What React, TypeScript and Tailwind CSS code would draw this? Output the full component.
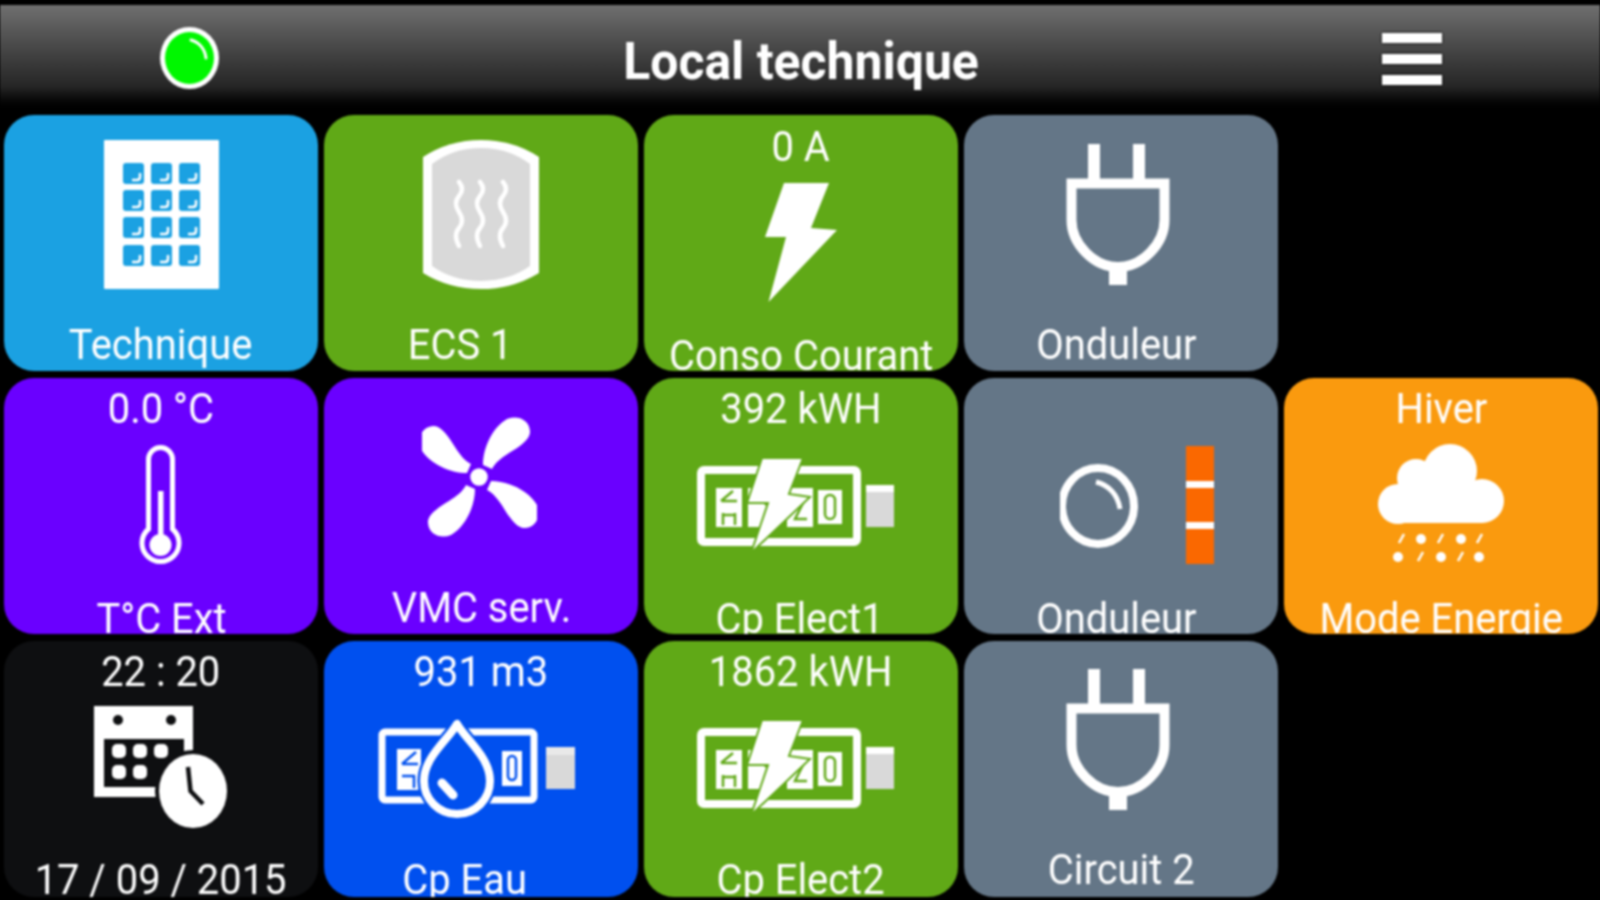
import type { ReactNode } from "react";

const fontFamily = "font-['Roboto','Liberation_Sans',sans-serif]";

function Tile({
  bg,
  value,
  valueClass = "",
  label,
  labelClass,
  children,
}: {
  bg: string;
  value?: string;
  valueClass?: string;
  label: string;
  labelClass: string;
  children: ReactNode;
}) {
  return (
    <div className={`flex h-[256px] w-[314px] flex-col items-center overflow-hidden rounded-[30px] text-[42px] font-normal text-white ${bg}`}>
      {value && (
        <div className={`h-[60px] shrink-0 scale-x-[0.95] whitespace-nowrap leading-[60px] ${valueClass}`}>{value}</div>
      )}
      {children}
      <div className={`h-[44px] shrink-0 scale-x-[0.95] whitespace-nowrap leading-[44px] ${labelClass}`}>{label}</div>
    </div>
  );
}

function BuildingIcon() {
  const xs = [19, 47, 75];
  const ys = [23, 50, 77, 105];
  return (
    <svg viewBox="0 0 115 149" className="mt-[25px] h-[149px] w-[115px] shrink-0">
      <rect width="115" height="149" rx="1" fill="#fff" />
      {ys.map((y) =>
        xs.map((x) => (
          <g key={`${x}-${y}`}>
            <rect x={x} y={y} width="21" height="21" rx="3" fill="#1ba1e2" />
            <path d={`M${x + 9} ${y + 17}h5q3 0 3-3v-4`} fill="none" stroke="#fff" strokeWidth="2.500" />
          </g>
        )),
      )}
    </svg>
  );
}

function TankIcon() {
  return (
    <svg viewBox="0 0 116 149" className="mt-[25px] h-[149px] w-[116px] shrink-0">
      <path d="M0 17Q26 0 58 0T116 17V133Q90 149 58 149T0 133Z" fill="#fff" />
      <path d="M9 24Q30 8 58 8T107 24V126Q86 141 58 141T9 126Z" fill="#d9d9d9" />
      {[36, 57, 80].map((x) => (
        <path
          key={x}
          d={`M${x} 42q6 7 0 14t0 16t0 16t0 18`}
          fill="none"
          stroke="#fff"
          strokeWidth="4.500"
          strokeLinecap="round"
        />
      ))}
    </svg>
  );
}

function BoltIcon() {
  return (
    <svg viewBox="0 0 72 120" className="mt-[5px] h-[120px] w-[72px] shrink-0">
      <path d="M19 1H64L46 46L72 48L3.500 120L21 55H0Z" fill="#fff" />
    </svg>
  );
}

function PlugIcon({ className }: { className: string }) {
  return (
    <svg viewBox="0 0 104 141" className={`h-[141px] w-[104px] shrink-0 ${className}`}>
      <rect x="22" y="0" width="12" height="36" fill="#fff" />
      <rect x="67" y="0" width="12" height="36" fill="#fff" />
      <rect x="43" y="118" width="18" height="23" fill="#fff" />
      <path
        d="M5.500 39.500H98.500V76C98.500 100 76 123 52 123C28 123 5.500 100 5.500 76Z"
        fill="none"
        stroke="#fff"
        strokeWidth="10"
      />
    </svg>
  );
}

function ThermometerIcon() {
  return (
    <svg viewBox="0 0 43 120" className="mt-[6px] mr-[1px] h-[120px] w-[43px] shrink-0">
      <path
        d="M9.500 84V14.500a12 12 0 0 1 24 0V84A18.500 18.500 0 1 1 9.500 84Z"
        fill="none"
        stroke="#fff"
        strokeWidth="5"
      />
      <rect x="19" y="46" width="5.500" height="52" fill="#fff" />
      <circle cx="21.500" cy="100" r="11" fill="#fff" />
    </svg>
  );
}

function FanIcon() {
  const blade = "M4-12C4-30 14-50 28-58C38-62 50-58 51-46C52-38 40-30 30-24C22-19 16-14 13-8Z";
  return (
    <svg viewBox="0 0 115 121" className="mt-[39px] mr-[4px] h-[121px] w-[115px] shrink-0">
      <g transform="translate(57 60)">
        {[0, 90, 180, 270].map((r) => (
          <path key={r} d={blade} fill="#fff" transform={`rotate(${r})`} />
        ))}
        <circle r="9.500" fill="#fff" stroke="#6a00ff" strokeWidth="1.500" />
      </g>
    </svg>
  );
}

// compteur: boitier, chiffres et borne
function MeterBody({ color }: { color: string }) {
  return (
    <>
      <rect x="4" y="13" width="156" height="72" rx="3" fill="none" stroke="#fff" strokeWidth="8" />
      <rect x="169" y="28" width="28" height="42" fill="#d9d9d9" />
      <rect x="169" y="28" width="28" height="7" fill="#fff" />
      <rect x="19" y="31" width="26" height="39" fill="#fff" />
      <rect x="51" y="31" width="26" height="39" fill="#fff" />
      <rect x="90" y="31" width="26" height="39" fill="#fff" />
      <rect x="121" y="33" width="24" height="34" fill="#fff" />
      <path d="M24 44l12-10M24 44h16M26 56v12M38 56v12M26 58h12M60 40l10 8M96 42q8-6 12 0l-10 20h12" fill="none" stroke={color} strokeWidth="2.500" />
      <rect x="128" y="38" width="10" height="24" rx="5" fill="none" stroke={color} strokeWidth="2.500" />
    </>
  );
}

function ElectricMeterIcon({ className }: { className: string }) {
  return (
    <svg viewBox="0 0 199 96" className={`h-[96px] w-[199px] shrink-0 ${className}`}>
      <MeterBody color="#60a917" />
      <path
        d="M65 1H106L92 37L113 40L54 96L71 46H50Z"
        fill="#fff"
        stroke="#60a917"
        strokeWidth="2"
      />
    </svg>
  );
}

function WaterMeterIcon() {
  return (
    <svg viewBox="0 0 199 99" className="mt-[17px] mr-[7px] h-[99px] w-[199px] shrink-0">
      <g transform="translate(0 9)">
        <rect x="4" y="4" width="152" height="68" rx="3" fill="none" stroke="#fff" strokeWidth="7" />
        <rect x="168" y="19" width="29" height="42" fill="#d9d9d9" />
        <rect x="168" y="19" width="29" height="8" fill="#e9e9e9" />
        <rect x="19" y="21" width="24" height="41" fill="#fff" />
        <rect x="124" y="23" width="20" height="35" fill="#fff" />
        <path d="M24 36l14-12M24 36h16M24 48h12v12" fill="none" stroke="#0050ef" strokeWidth="2.500" />
        <rect x="130" y="28" width="8" height="24" rx="4" fill="none" stroke="#0050ef" strokeWidth="2.500" />
      </g>
      <path
        d="M79 5C70 21 46 38 46 62A33 33 0 0 0 112 62C112 38 88 21 79 5Z"
        fill="#0050ef"
        stroke="#0050ef"
        strokeWidth="13"
        strokeLinejoin="round"
      />
      <path
        d="M79 5C70 21 46 38 46 62A33 33 0 0 0 112 62C112 38 88 21 79 5Z"
        fill="#0050ef"
        stroke="#fff"
        strokeWidth="8"
        strokeLinejoin="round"
      />
      <path d="M64 64L75 76" stroke="#fff" strokeWidth="9" strokeLinecap="round" />
    </svg>
  );
}

function UpsIcon() {
  return (
    <svg viewBox="0 0 155 120" className="mt-[67px] ml-[33px] h-[120px] w-[155px] shrink-0">
      <ellipse cx="38" cy="61" rx="36" ry="38" fill="none" stroke="#fff" strokeWidth="8" />
      <path d="M36 37C49 40 58 50 60 64" fill="none" stroke="#fff" strokeWidth="5" />
      <rect x="126" y="1" width="28" height="118" fill="#fa6800" />
      <rect x="126" y="36" width="28" height="7" fill="#fff" />
      <rect x="126" y="77" width="28" height="7" fill="#fff" />
    </svg>
  );
}

function SnowCloudIcon() {
  const row1 = [24, 43, 63, 83, 102];
  const row2 = [20, 43, 63, 83, 101];
  return (
    <svg viewBox="0 0 126 120" className="mt-[5px] h-[120px] w-[126px] shrink-0">
      <circle cx="20" cy="60" r="20" fill="#fff" />
      <circle cx="38" cy="34" r="19" fill="#fff" />
      <circle cx="72" cy="27" r="27" fill="#fff" />
      <circle cx="104" cy="57" r="22" fill="#fff" />
      <rect x="20" y="40" width="85" height="39" fill="#fff" />
      {row1.map((x, i) =>
        i % 2 === 0 ? (
          <path key={x} d={`M${x - 3} 99l5-9`} stroke="#fff" strokeWidth="2.500" />
        ) : (
          <circle key={x} cx={x} cy="95" r="5" fill="#fff" />
        ),
      )}
      {row2.map((x, i) =>
        i % 2 === 1 ? (
          <path key={x} d={`M${x - 3} 117l5-9`} stroke="#fff" strokeWidth="2.500" />
        ) : (
          <circle key={x} cx={x} cy="113" r="5" fill="#fff" />
        ),
      )}
    </svg>
  );
}

function CalendarClockIcon() {
  return (
    <svg viewBox="0 0 136 124" className="mt-[4px] mr-[2px] h-[124px] w-[136px] shrink-0">
      <rect x="2" y="0" width="99" height="91" fill="#fff" />
      <rect x="12" y="33" width="80" height="48" fill="#0e0f11" />
      <circle cx="26" cy="14" r="5" fill="#0e0f11" />
      <circle cx="79" cy="14" r="5" fill="#0e0f11" />
      {[20, 41, 62].map((x) => (
        <rect key={x} x={x} y="38" width="14" height="14" rx="5" fill="#fff" />
      ))}
      {[20, 41].map((x) => (
        <rect key={x} x={x} y="59" width="14" height="14" rx="5" fill="#fff" />
      ))}
      <ellipse cx="101" cy="85" rx="38" ry="41" fill="#0e0f11" />
      <ellipse cx="101" cy="85" rx="34" ry="37" fill="#fff" />
      <path d="M96 61L98.500 85L111 98" fill="none" stroke="#0e0f11" strokeWidth="4.500" />
    </svg>
  );
}

function StatusLed() {
  return (
    <svg viewBox="0 0 59 62" className="h-[62px] w-[59px]">
      <ellipse cx="29.500" cy="31" rx="29.500" ry="31" fill="#fff" />
      <ellipse cx="29.500" cy="31" rx="24.500" ry="26" fill="#00f700" />
      <path d="M31 13C39 15 45 22 46 31" fill="none" stroke="#fff" strokeWidth="3" strokeLinecap="round" />
    </svg>
  );
}

export default function App() {
  return (
    <div className="h-[900px] w-[1600px] overflow-hidden bg-black">
      <div className={`h-[900px] w-[1600px] blur-[0.8px] ${fontFamily}`}>
        {/* Barre du haut */}
        <div className="grid h-[115px] grid-cols-[378px_1fr_376px] items-center border-t-[5px] border-black bg-gradient-to-b from-[#707070] via-[#262626] via-[74%] to-black pb-[8px]">
          <div className="flex justify-center pt-[3px]">
            <StatusLed />
          </div>
          <h1 className="scale-x-[0.96] pt-[11px] text-center text-[52px] leading-[60px] font-bold text-white">Local technique</h1>
          <div className="flex flex-col items-center gap-[11px] pt-[5px]">
            <span className="h-[10px] w-[60px] bg-white shadow-[0_0_3px_#000]" />
            <span className="h-[10px] w-[60px] bg-white shadow-[0_0_3px_#000]" />
            <span className="h-[10px] w-[60px] bg-white shadow-[0_0_3px_#000]" />
          </div>
        </div>

        <div className="grid grid-cols-[repeat(5,314px)] gap-x-[6px] gap-y-[7px] pl-[4px]">
          <Tile bg="bg-[#1ba1e2]" label="Technique" labelClass="mt-[34px]">
            <BuildingIcon />
          </Tile>
          <Tile bg="bg-[#60a917]" label="ECS 1" labelClass="mt-[34px] mr-[42px]">
            <TankIcon />
          </Tile>
          <Tile bg="bg-[#60a917]" value="0 A" valueClass="mt-[2px]" label="Conso Courant" labelClass="mt-[32px]">
            <BoltIcon />
          </Tile>
          <Tile bg="bg-[#647687]" label="Onduleur" labelClass="mt-[38px] mr-[10px]">
            <PlugIcon className="mt-[29px] mr-[7px]" />
          </Tile>
          <div />

          <Tile bg="bg-[#6a00ff]" value="0.0 °C" valueClass="mt-[1px]" label="T°C Ext" labelClass="mt-[32px]">
            <ThermometerIcon />
          </Tile>
          <Tile bg="bg-[#6a00ff]" label="VMC serv." labelClass="mt-[48px]">
            <FanIcon />
          </Tile>
          <Tile bg="bg-[#60a917]" value="392 kWH" valueClass="mt-[1px]" label="Cp Elect1" labelClass="mt-[44px] mr-[2px]">
            <ElectricMeterIcon className="mt-[18px] mr-[9px]" />
          </Tile>
          <Tile bg="bg-[#647687]" label="Onduleur" labelClass="mt-[32px] mr-[10px]">
            <UpsIcon />
          </Tile>
          <Tile bg="bg-[#fa9a0e]" value="Hiver" valueClass="mt-[1px]" label="Mode Energie" labelClass="mt-[33px]">
            <SnowCloudIcon />
          </Tile>

          <Tile bg="bg-[#0e0f11]" value="22 : 20" valueClass="mt-[1px]" label="17 / 09 / 2015" labelClass="mt-[28px]">
            <CalendarClockIcon />
          </Tile>
          <Tile bg="bg-[#0050ef]" value="931 m3" valueClass="mt-[1px]" label="Cp Eau" labelClass="mt-[40px] mr-[32px]">
            <WaterMeterIcon />
          </Tile>
          <Tile bg="bg-[#60a917]" value="1862 kWH" valueClass="mt-[1px]" label="Cp Elect2" labelClass="mt-[43px]">
            <ElectricMeterIcon className="mt-[17px] mr-[9px]" />
          </Tile>
          <Tile bg="bg-[#647687]" label="Circuit 2" labelClass="mt-[38px]">
            <PlugIcon className="mt-[28px] mr-[7px]" />
          </Tile>
          <div />
        </div>
      </div>
    </div>
  );
}
